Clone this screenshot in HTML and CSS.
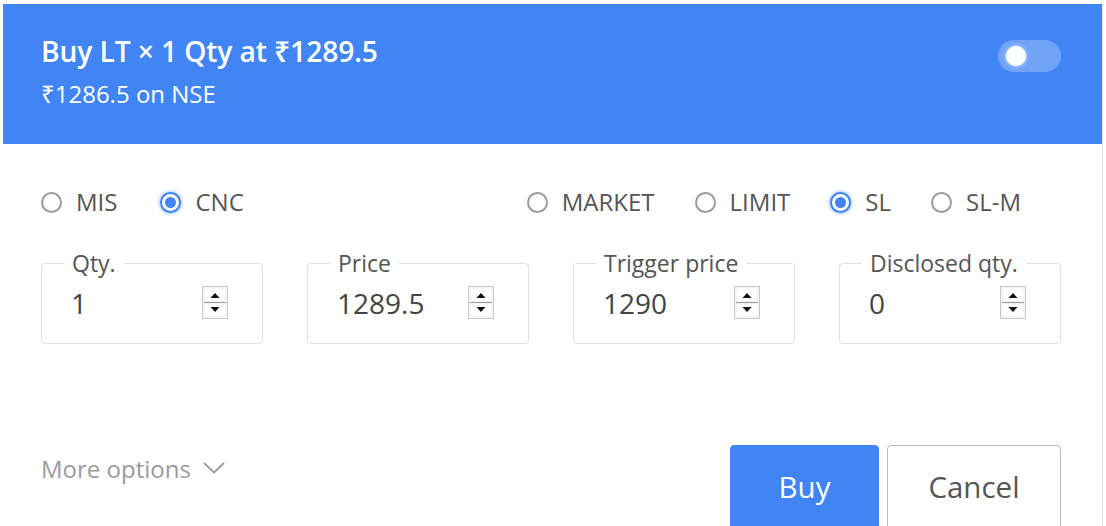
FILE: index.html
```html
<!DOCTYPE html>
<html lang="en">
<head>
<meta charset="utf-8">
<title>Order window</title>
<link rel="stylesheet" href="styles.css">
</head>
<body>
<div class="modal">
  <header class="head">
    <div class="titles">
      <h1 class="title">Buy LT × 1 Qty at ₹1289.5</h1>
      <div class="sub">₹1286.5 on NSE</div>
    </div>
    <span class="toggle"><span class="knob"></span></span>
  </header>
  <div class="body">
    <div class="radios">
      <div class="group">
        <label class="radio"><span class="dot"></span>MIS</label>
        <label class="radio"><span class="dot on"></span>CNC</label>
      </div>
      <div class="group right">
        <label class="radio"><span class="dot"></span>MARKET</label>
        <label class="radio"><span class="dot"></span>LIMIT</label>
        <label class="radio"><span class="dot on"></span>SL</label>
        <label class="radio"><span class="dot"></span>SL-M</label>
      </div>
    </div>
    <div class="fields">
      <fieldset class="field"><legend>Qty.</legend><span class="val">1</span><svg class="spin" viewBox="0 0 26 33" width="26" height="33"><rect x="0.5" y="0.5" width="25" height="32" fill="#f4f4f4" stroke="#c9c9c9"/><rect x="3" y="3" width="20" height="12" fill="#fff"/><rect x="3" y="18" width="20" height="12" fill="#fff"/><line x1="2" y1="16.5" x2="24" y2="16.5" stroke="#9a9a9a"/><path d="M8.5 12 L13 7 L17.5 12 Z" fill="#111"/><path d="M8.5 21 L13 26 L17.5 21 Z" fill="#111"/></svg></fieldset>
      <fieldset class="field"><legend>Price</legend><span class="val">1289.5</span><svg class="spin" viewBox="0 0 26 33" width="26" height="33"><rect x="0.5" y="0.5" width="25" height="32" fill="#f4f4f4" stroke="#c9c9c9"/><rect x="3" y="3" width="20" height="12" fill="#fff"/><rect x="3" y="18" width="20" height="12" fill="#fff"/><line x1="2" y1="16.5" x2="24" y2="16.5" stroke="#9a9a9a"/><path d="M8.5 12 L13 7 L17.5 12 Z" fill="#111"/><path d="M8.5 21 L13 26 L17.5 21 Z" fill="#111"/></svg></fieldset>
      <fieldset class="field"><legend>Trigger price</legend><span class="val">1290</span><svg class="spin" viewBox="0 0 26 33" width="26" height="33"><rect x="0.5" y="0.5" width="25" height="32" fill="#f4f4f4" stroke="#c9c9c9"/><rect x="3" y="3" width="20" height="12" fill="#fff"/><rect x="3" y="18" width="20" height="12" fill="#fff"/><line x1="2" y1="16.5" x2="24" y2="16.5" stroke="#9a9a9a"/><path d="M8.5 12 L13 7 L17.5 12 Z" fill="#111"/><path d="M8.5 21 L13 26 L17.5 21 Z" fill="#111"/></svg></fieldset>
      <fieldset class="field"><legend>Disclosed qty.</legend><span class="val">0</span><svg class="spin" viewBox="0 0 26 33" width="26" height="33"><rect x="0.5" y="0.5" width="25" height="32" fill="#f4f4f4" stroke="#c9c9c9"/><rect x="3" y="3" width="20" height="12" fill="#fff"/><rect x="3" y="18" width="20" height="12" fill="#fff"/><line x1="2" y1="16.5" x2="24" y2="16.5" stroke="#9a9a9a"/><path d="M8.5 12 L13 7 L17.5 12 Z" fill="#111"/><path d="M8.5 21 L13 26 L17.5 21 Z" fill="#111"/></svg></fieldset>
    </div>
    <div class="footer">
      <span class="more">More options <svg class="chev" viewBox="0 0 22 12" width="22" height="12"><path d="M1 1 L11 10.5 L21 1" fill="none" stroke="#9b9b9b" stroke-width="1.8"/></svg></span>
      <div class="actions">
        <button class="btn buy">Buy</button>
        <button class="btn cancel">Cancel</button>
      </div>
    </div>
  </div>
</div>
</body>
</html>
```
FILE: styles.css
```css
* { box-sizing: border-box; }
html, body { margin: 0; padding: 0; background: #fff; overflow: hidden; }
body {
  font-family: "Open Sans", "Noto Sans", sans-serif;
  width: 1106px;
  height: 526px;
}
.modal {
  margin: 4px 0 0 3px;
  width: 1100px;
  border-right: 1px solid #e6e6e6;
  height: 600px;
}
.head {
  background: #4184f3;
  height: 140px;
  display: flex;
  align-items: flex-start;
  justify-content: space-between;
  padding: 28px 41px 0 38px;
  color: #fff;
}
.title {
  margin: 0;
  font-size: 28.2px;
  font-weight: 600;
  line-height: 38px;
  letter-spacing: -0.1px;
}
.sub {
  font-size: 24px;
  line-height: 30px;
  margin-top: 9px;
}
.toggle {
  display: flex;
  align-items: center;
  width: 63px;
  height: 32px;
  border-radius: 16px;
  background: rgba(255,255,255,0.25);
  margin-top: 8px;
  padding-left: 8px;
}
.knob {
  width: 20px;
  height: 20px;
  border-radius: 50%;
  background: #fff;
  box-shadow: 0 0 4px rgba(255,255,255,0.8);
}
.body {
  padding: 43px 41px 0 38px;
}
.radios {
  display: flex;
  justify-content: space-between;
  height: 30px;
}
.group { display: flex; align-items: center; gap: 43px; }
.group.right { margin-right: 40px; gap: 40px; }
.radio {
  display: flex;
  align-items: center;
  gap: 14px;
  font-size: 24px;
  color: #555;
  line-height: 30px;
}
.dot {
  width: 21px;
  height: 21px;
  border-radius: 50%;
  border: 2px solid #9a9a9a;
  display: flex;
  align-items: center;
  justify-content: center;
  background: #fff;
}
.dot.on {
  border-color: #4184f3;
  box-shadow: 0 0 3px 1px rgba(65,132,243,0.45);
}
.dot.on::after {
  content: "";
  width: 11px;
  height: 11px;
  border-radius: 50%;
  background: #4184f3;
}
.fields {
  display: grid;
  grid-template-columns: repeat(4, 1fr);
  column-gap: 44px;
  margin-top: 33px;
}
.field {
  margin: 0;
  min-width: 0;
  height: 94px;
  border: 1px solid #e0e0e0;
  border-radius: 4px;
  padding: 0 34px 0 0;
  display: flex;
  align-items: center;
  justify-content: space-between;
}
.field legend {
  font-size: 23px;
  line-height: 26px;
  color: #555;
  padding: 0 8px;
  margin-left: 22px;
  white-space: nowrap;
}
.val {
  font-size: 28px;
  color: #444;
  margin: -14px 0 0 29px;
}
.spin { display: block; margin-top: -14px; }
.footer {
  display: flex;
  justify-content: space-between;
  align-items: flex-start;
  margin-top: 101px;
}
.more {
  display: flex;
  align-items: center;
  gap: 12px;
  font-size: 24px;
  color: #9b9b9b;
  margin-top: 7px;
}
.chev { display: block; margin-top: -2px; }
.actions { display: flex; gap: 8px; }
.btn {
  font-family: "Open Sans", "Noto Sans", sans-serif;
  font-size: 29.5px;
  height: 92px;
  border-radius: 4px;
  padding: 0 0 10px;
  cursor: pointer;
}
.buy {
  width: 149px;
  background: #4184f3;
  border: 1px solid #4184f3;
  color: #fff;
}
.cancel {
  width: 174px;
  background: #fff;
  border: 1px solid #b8b8b8;
  color: #555;
}
```
